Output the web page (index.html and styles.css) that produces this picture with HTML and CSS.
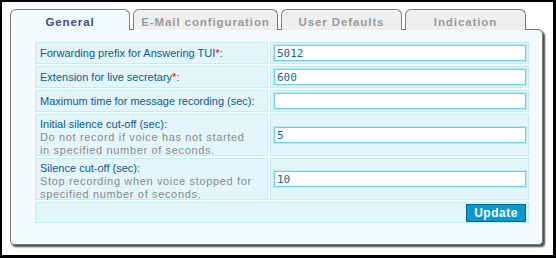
FILE: index.html
```html
<!DOCTYPE html>
<html>
<head>
<meta charset="utf-8">
<link rel="stylesheet" href="styles.css">
</head>
<body>
<div class="frame">
  <div class="tabs">
    <div class="tab active t1">General</div>
    <div class="tab t2">E-Mail configuration</div>
    <div class="tab t3">User Defaults</div>
    <div class="tab t4">Indication</div>
  </div>
  <div class="panel">
    <div class="grid">
      <div class="cell label r1">Forwarding prefix for Answering TUI<span class="req">*</span>:</div>
      <div class="cell value r1"><input class="inp" type="text" value="5012"></div>
      <div class="cell label r1">Extension for live secretary<span class="req">*</span>:</div>
      <div class="cell value r1"><input class="inp" type="text" value="600"></div>
      <div class="cell label r1">Maximum time for message recording (sec):</div>
      <div class="cell value r1"><input class="inp" type="text" value=""></div>
      <div class="cell label r2">Initial silence cut-off (sec):<div class="desc">Do not record if voice has not started in specified number of seconds.</div></div>
      <div class="cell value r2"><input class="inp" type="text" value="5"></div>
      <div class="cell label r2">Silence cut-off (sec):<div class="desc">Stop recording when voice stopped for specified number of seconds.</div></div>
      <div class="cell value r2"><input class="inp" type="text" value="10"></div>
      <div class="cell actions"><button class="btn">Update</button></div>
    </div>
  </div>
</div>
</body>
</html>
```
FILE: styles.css
```css
html, body { margin: 0; padding: 0; }
body {
  background: #000;
  width: 556px;
  height: 258px;
  padding: 2px 3px 3px 2px;
  box-sizing: border-box;
  font-family: "Liberation Sans", Arial, sans-serif;
}
.frame {
  background: #fff;
  width: 551px;
  height: 253px;
  padding: 7px 0 0 8px;
  box-sizing: border-box;
}
.tabs {
  display: flex;
  height: 20px;
  position: relative;
  z-index: 2;
}
.tab {
  box-sizing: border-box;
  height: 21px;
  border: 1px solid #7d7d7d;
  border-bottom: none;
  border-radius: 6px 6px 0 0;
  background: #efefef;
  color: #9a9a9a;
  font-weight: bold;
  font-size: 11.5px;
  letter-spacing: 0.9px;
  text-align: center;
  line-height: 20px;
  padding-top: 2px;
  margin-right: 3px;
}
.tab.active {
  background: #f3fbfe;
  color: #3d4b7b;
}
.t1 { width: 120px; }
.t2 { width: 145px; }
.t3 { width: 121px; }
.t4 { width: 121px; }
.panel {
  box-sizing: border-box;
  width: 533px;
  height: 216px;
  background: #f3fbfe;
  border: 1px solid #7a7a7a;
  border-radius: 0 5px 4px 4px;
  box-shadow: 2px 2px 2px #4a4a4a;
  padding: 12px 0 0 24px;
  position: relative;
  z-index: 1;
}
.grid {
  display: grid;
  grid-template-columns: 233px 259px;
  grid-template-rows: 22px 22px 22px 42px 42px 21px;
  gap: 2px;
}
.cell {
  box-sizing: border-box;
  background: #e2f6fc;
  border: 1px solid #c2ecf9;
}
.label {
  color: #0e5b8c;
  font-size: 11px;
  padding: 0 0 0 4px;
}
.r1.label { line-height: 20px; }
.r2.label { line-height: 13px; padding: 3px 10px 0 4px; }
.req { color: #ff0000; }
.desc {
  color: #8a8a8a;
  letter-spacing: 0.65px;
}
.value {
  display: flex;
  align-items: center;
  padding: 0 2px 0 3px;
}
.inp {
  box-sizing: border-box;
  width: 252px;
  height: 16px;
  margin: 0;
  border: 1px solid #6fd0f2;
  box-shadow: 0 0 0 1px #bdeafa;
  background: #fff;
  color: #146896;
  font-family: "DejaVu Sans Mono", monospace;
  font-size: 11px;
  padding: 0 2px;
  outline: none;
}
.actions {
  grid-column: 1 / 3;
  display: flex;
  justify-content: flex-end;
  align-items: center;
  padding-right: 2px;
}
.btn {
  box-sizing: border-box;
  width: 60px;
  height: 18px;
  background: #0a99cc;
  border: 1px solid #07628a;
  color: #fff;
  font-family: "Liberation Sans", Arial, sans-serif;
  font-weight: bold;
  font-size: 12px;
  letter-spacing: 0.5px;
  padding: 0;
  margin: 0;
}
```
